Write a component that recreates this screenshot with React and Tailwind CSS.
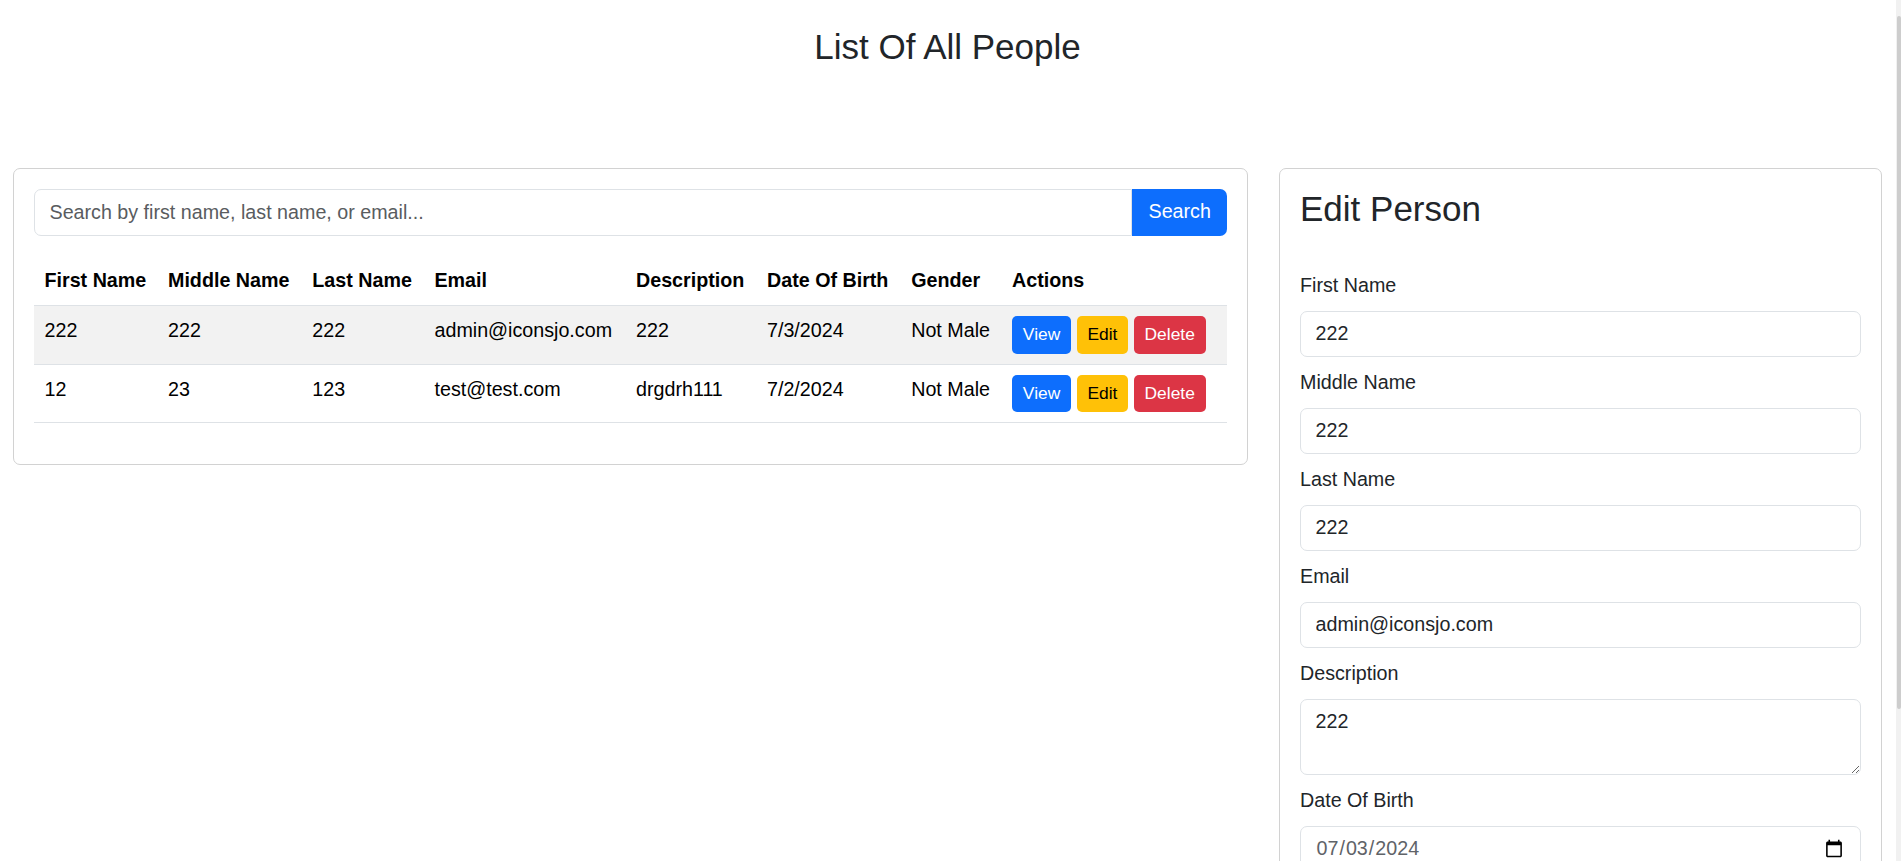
import React from "react";

const people = [
  {
    firstName: "222",
    middleName: "222",
    lastName: "222",
    email: "admin@iconsjo.com",
    description: "222",
    dob: "7/3/2024",
    gender: "Not Male",
  },
  {
    firstName: "12",
    middleName: "23",
    lastName: "123",
    email: "test@test.com",
    description: "drgdrh111",
    dob: "7/2/2024",
    gender: "Not Male",
  },
];

const columns = [
  { label: "First Name", width: "w-[123.5px]" },
  { label: "Middle Name", width: "w-[144.3px]" },
  { label: "Last Name", width: "w-[122.2px]" },
  { label: "Email", width: "w-[201.5px]" },
  { label: "Description", width: "w-[131px]" },
  { label: "Date Of Birth", width: "w-[144.2px]" },
  { label: "Gender", width: "w-[100.8px]" },
  { label: "Actions", width: "w-auto" },
];

const fieldBase =
  "block h-[46px] w-full rounded-[7px] border border-[#dee2e6] bg-white px-[14.5px] text-[19.7px] leading-[29px] outline-none";

const Field = ({ label, children }) => (
  <div className="mb-[11px]">
    <label className="mb-[11px] block text-[19.7px] leading-[29px] text-[#212529]">
      {label}
    </label>
    {children}
  </div>
);

const cell = "border-b border-[#dee2e6] px-[10.5px] py-[10px] align-top";

const PeopleTable = () => (
  <div className="rounded-[7px] border border-[#d2d2d2] bg-white p-[20px]">
    <div className="mb-[20.5px] flex h-[46.8px]">
      <input
        type="text"
        placeholder="Search by first name, last name, or email..."
        className="h-full flex-1 rounded-l-[7px] border border-[#dee2e6] px-[14.5px] text-[19.7px] text-[#212529] outline-none placeholder:text-[#595c5f]"
      />
      <button className="h-full w-[94.6px] rounded-r-[7px] bg-[#0d6efd] text-[19.7px] text-white">
        Search
      </button>
    </div>

    <table className="mb-[21px] w-full table-fixed border-collapse text-[19.7px] leading-[29px] text-black">
      <thead>
        <tr>
          {columns.map((c) => (
            <th
              key={c.label}
              className={`${c.width} border-b border-[#dee2e6] px-[10.5px] py-[10px] text-left font-bold`}
            >
              {c.label}
            </th>
          ))}
        </tr>
      </thead>
      <tbody>
        {people.map((p, i) => (
          <tr key={p.email} className={i % 2 === 0 ? "bg-[#f2f2f2]" : "bg-white"}>
            <td className={cell}>{p.firstName}</td>
            <td className={cell}>{p.middleName}</td>
            <td className={cell}>{p.lastName}</td>
            <td className={cell}>{p.email}</td>
            <td className={cell}>{p.description}</td>
            <td className={cell}>{p.dob}</td>
            <td className={cell}>{p.gender}</td>
            <td className={cell}>
              <div className="flex gap-[5.4px]">
                <button className="h-[37.6px] rounded-[5px] bg-[#0d6efd] px-[10.9px] text-[17.4px] text-white">
                  View
                </button>
                <button className="h-[37.6px] rounded-[5px] bg-[#ffc107] px-[10.9px] text-[17.4px] text-black">
                  Edit
                </button>
                <button className="h-[37.6px] rounded-[5px] bg-[#dc3545] px-[10.9px] text-[17.4px] text-white">
                  Delete
                </button>
              </div>
            </td>
          </tr>
        ))}
      </tbody>
    </table>
  </div>
);

const EditPerson = () => (
  <div className="rounded-[7px] border border-[#d2d2d2] bg-white p-[20px]">
    <h3 className="mb-[41px] text-[35px] leading-[40.8px] font-normal text-[#212529]">
      Edit Person
    </h3>
    <Field label="First Name">
      <input className={`${fieldBase} text-[#212529]`} defaultValue="222" />
    </Field>
    <Field label="Middle Name">
      <input className={`${fieldBase} text-[#212529]`} defaultValue="222" />
    </Field>
    <Field label="Last Name">
      <input className={`${fieldBase} text-[#212529]`} defaultValue="222" />
    </Field>
    <Field label="Email">
      <input className={`${fieldBase} text-[#212529]`} defaultValue="admin@iconsjo.com" />
    </Field>
    <Field label="Description">
      <textarea
        className="block h-[76px] w-full rounded-[7px] border border-[#dee2e6] px-[14.5px] py-[7.3px] text-[19.7px] leading-[29px] text-[#212529] outline-none"
        defaultValue="222"
      />
    </Field>
    <Field label="Date Of Birth">
      <input
        type="date"
        className={`${fieldBase} text-[#5f6368]`}
        defaultValue="2024-07-03"
      />
    </Field>
    <Field label="Gender">
      <select className={`${fieldBase} text-[#212529]`} defaultValue="Not Male">
        <option>Male</option>
        <option>Not Male</option>
      </select>
    </Field>
    <button className="mt-[10px] h-[46px] rounded-[7px] bg-[#0d6efd] px-[14.5px] text-[19.7px] text-white">
      Save
    </button>
  </div>
);

export default function App() {
  return (
    <div className="relative h-[861px] overflow-hidden bg-white font-['Liberation_Sans',Arial,sans-serif] text-[#212529]">
      <h3 className="pr-[6px] pt-[27px] text-center text-[35px] leading-[40.8px] font-normal">
        List Of All People
      </h3>

      <div className="mt-[100px] grid grid-cols-[1235px_603px] gap-[31px] pl-[13px]">
        <div className="self-start">
          <PeopleTable />
        </div>
        <EditPerson />
      </div>

      {/* scrollbar */}
      <div className="absolute right-0 top-0 h-full w-[5px] bg-[#f1f1f1]">
        <div className="mt-[16px] ml-[1px] h-[693px] w-[4px] rounded-full bg-[#cdcdcd]" />
      </div>
    </div>
  );
}
